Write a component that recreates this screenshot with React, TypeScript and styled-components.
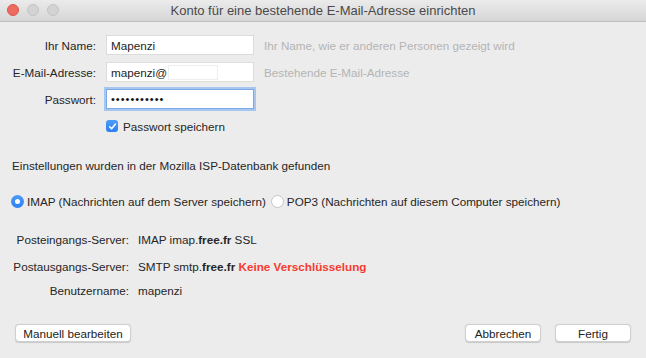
import styled, { createGlobalStyle } from 'styled-components';

const GlobalStyle = createGlobalStyle`
  html, body {
    margin: 0;
    padding: 0;
    background: #ececec;
  }
  body {
    font-family: 'Liberation Sans', Arial, sans-serif;
    font-size: 11.7px;
    color: #262626;
  }
`;

const fields = [
  { label: 'Ihr Name:', value: 'Mapenzi', hint: 'Ihr Name, wie er anderen Personen gezeigt wird' },
  { label: 'E-Mail-Adresse:', value: 'mapenzi@', hint: 'Bestehende E-Mail-Adresse', redacted: true },
];

const App = () => {
  return (
    <>
      <GlobalStyle />
      <Window>
        <TitleBar>
          <Lights>
            <Light $color="#ee6a5e" $edge="#d9574b" />
            <Light $color="#d3d3d3" $edge="#c3c3c3" />
            <Light $color="#d3d3d3" $edge="#c3c3c3" />
          </Lights>
          <Title>Konto für eine bestehende E-Mail-Adresse einrichten</Title>
        </TitleBar>

        <Body>
          <FormGrid>
            {fields.map((f) => (
              <Row key={f.label}>
                <Label>{f.label}</Label>
                <Field>
                  {f.value}
                  {f.redacted && <Redacted />}
                </Field>
                <Hint>{f.hint}</Hint>
              </Row>
            ))}
            <Row>
              <Label>Passwort:</Label>
              <Field $focused>
                <Dots>•••••••••••</Dots>
              </Field>
              <span />
            </Row>
            <Row>
              <span />
              <CheckRow>
                <Checkbox>
                  <svg width="9" height="9" viewBox="0 0 10 10">
                    <path
                      d="M1.8 5.3 L4 7.6 L8.3 2.2"
                      fill="none"
                      stroke="#fff"
                      strokeWidth="1.7"
                      strokeLinecap="round"
                      strokeLinejoin="round"
                    />
                  </svg>
                </Checkbox>
                Passwort speichern
              </CheckRow>
              <span />
            </Row>
          </FormGrid>

          <Info>Einstellungen wurden in der Mozilla ISP-Datenbank gefunden</Info>

          <RadioRow>
            <RadioOption>
              <Radio $checked />
              IMAP (Nachrichten auf dem Server speichern)
            </RadioOption>
            <RadioOption>
              <Radio />
              POP3 (Nachrichten auf diesem Computer speichern)
            </RadioOption>
          </RadioRow>

          <ServerGrid>
            <ServerLabel>Posteingangs-Server:</ServerLabel>
            <ServerValue>
              IMAP imap.<b>free.fr</b> SSL
            </ServerValue>
            <ServerLabel>Postausgangs-Server:</ServerLabel>
            <ServerValue>
              SMTP smtp.<b>free.fr</b> <Warn>Keine Verschlüsselung</Warn>
            </ServerValue>
            <ServerLabel>Benutzername:</ServerLabel>
            <ServerValue>mapenzi</ServerValue>
          </ServerGrid>
        </Body>

        <Footer>
          <Button $width={116}>Manuell bearbeiten</Button>
          <FooterRight>
            <Button $width={76}>Abbrechen</Button>
            <Button $width={76}>Fertig</Button>
          </FooterRight>
        </Footer>
      </Window>
    </>
  );
};

export default App;

const Window = styled.div`
  width: 646px;
  height: 358px;
  display: flex;
  flex-direction: column;
  background: #ececec;
  overflow: hidden;
`;

const TitleBar = styled.div`
  position: relative;
  height: 21px;
  flex-shrink: 0;
  display: flex;
  align-items: center;
  justify-content: center;
  background: linear-gradient(#ebebeb, #d6d6d6);
  border-bottom: 1px solid #bdbdbd;
`;

const Lights = styled.div`
  position: absolute;
  left: 7px;
  top: 4px;
  display: flex;
  gap: 8px;
`;

const Light = styled.span<{ $color: string; $edge: string }>`
  box-sizing: border-box;
  width: 12px;
  height: 12px;
  border-radius: 50%;
  background: ${(p) => p.$color};
  border: 0.5px solid ${(p) => p.$edge};
`;

const Title = styled.div`
  font-size: 13px;
  color: #4a4a4a;
`;

const Body = styled.div`
  padding-top: 13px;
`;

const FormGrid = styled.div`
  display: grid;
  grid-template-columns: 96px 148px 1fr;
  grid-auto-rows: 20px;
  column-gap: 10px;
  row-gap: 7px;
`;

const Row = styled.div`
  display: contents;
`;

const Label = styled.div`
  text-align: right;
  align-self: center;
  color: #262626;
`;

const Field = styled.div<{ $focused?: boolean }>`
  box-sizing: border-box;
  height: 20px;
  display: flex;
  align-items: center;
  padding: 0 4px;
  background: #fff;
  border: 1px solid ${(p) => (p.$focused ? '#7ba8e6' : '#dcdcdc')};
  box-shadow: ${(p) => (p.$focused ? '0 0 0 2px #a8c7f0' : 'none')};
  color: #1e1e1e;
`;

const Redacted = styled.span`
  width: 48px;
  height: 13px;
  margin-left: 1px;
  background: #fff;
  border: 1px solid #eeeeee;
`;

const Dots = styled.span`
  font-size: 11px;
  letter-spacing: 1px;
  color: #111;
`;

const Hint = styled.div`
  align-self: center;
  color: #b4b4b4;
`;

const CheckRow = styled.label`
  display: flex;
  align-items: center;
  gap: 5px;
`;

const Checkbox = styled.span`
  width: 12px;
  height: 12px;
  border-radius: 3px;
  background: linear-gradient(#4f9bf8, #2a7ff3);
  display: flex;
  align-items: center;
  justify-content: center;
`;

const Info = styled.div`
  margin-top: 22px;
  padding-left: 12px;
  line-height: 16px;
`;

const RadioRow = styled.div`
  margin-top: 17px;
  height: 20px;
  padding-left: 11px;
  display: flex;
  align-items: center;
  gap: 5px;
`;

const RadioOption = styled.label`
  display: flex;
  align-items: center;
  gap: 3px;
`;

const Radio = styled.span<{ $checked?: boolean }>`
  box-sizing: border-box;
  width: 13px;
  height: 13px;
  border-radius: 50%;
  display: flex;
  align-items: center;
  justify-content: center;
  background: ${(p) => (p.$checked ? 'linear-gradient(#4f9bf8, #2a7ff3)' : '#fff')};
  border: ${(p) => (p.$checked ? 'none' : '1px solid #c6c6c6')};

  &::after {
    content: '';
    width: 5px;
    height: 5px;
    border-radius: 50%;
    background: #fff;
    display: ${(p) => (p.$checked ? 'block' : 'none')};
  }
`;

const ServerGrid = styled.div`
  margin-top: 19px;
  display: grid;
  grid-template-columns: 129px 1fr;
  grid-template-rows: 27px 24px 20px;
  column-gap: 9px;
`;

const ServerLabel = styled.div`
  text-align: right;
  line-height: 20px;
`;

const ServerValue = styled.div`
  line-height: 20px;

  b {
    font-weight: bold;
  }
`;

const Warn = styled.b`
  color: #f63b30;
`;

const Footer = styled.div`
  margin-top: auto;
  display: flex;
  justify-content: space-between;
  padding: 0 15px 16px 15px;
`;

const FooterRight = styled.div`
  display: flex;
  gap: 14px;
`;

const Button = styled.button<{ $width: number }>`
  box-sizing: border-box;
  width: ${(p) => p.$width}px;
  height: 18px;
  padding: 0;
  font-family: inherit;
  font-size: 11.7px;
  color: #222;
  background: #fff;
  border: 1px solid #cfcfcf;
  border-radius: 4px;
  box-shadow: 0 0.5px 1px rgba(0, 0, 0, 0.15);
`;
